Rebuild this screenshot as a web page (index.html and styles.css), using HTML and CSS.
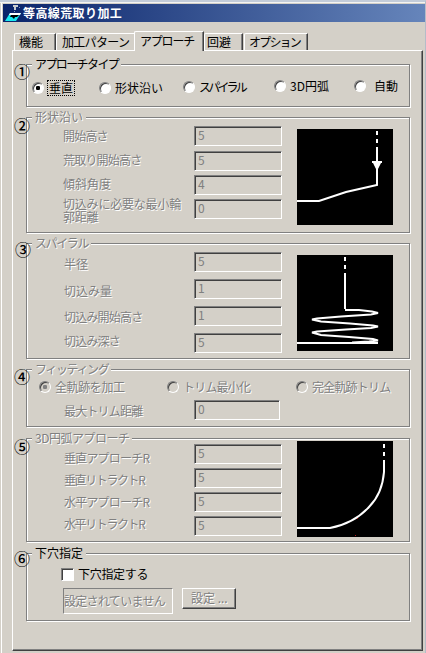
FILE: index.html
```html
<!DOCTYPE html>
<html lang="ja">
<head>
<meta charset="utf-8">
<title>等高線荒取り加工</title>
<link rel="stylesheet" href="styles.css">
</head>
<body>
<div class="window">
  <header class="titlebar">
    <svg class="app-icon" width="17" height="17" viewBox="0 0 17 17">
      <path d="M5 8H16L11 16H0Z" fill="#19e8f0"/>
      <path d="M5 8H16L15 10H4Z" fill="#fff"/>
      <path d="M6 10H14L12 12H10L9 14L7 12H5Z" fill="#000"/>
      <path d="M8 0H13V2H11V5H9V2H8Z" fill="#c8ccd0"/>
      <path d="M14 2h1v1h-1zM9 6h1v1h-1z" fill="#8a9ab8"/>
    </svg>
    <span class="title">等高線荒取り加工</span>
  </header>

  <nav class="tabs">
    <div class="tab t1">機能</div>
    <div class="tab t2">加工パターン</div>
    <div class="tab t3 active">アプローチ</div>
    <div class="tab t4">回避</div>
    <div class="tab t5">オプション</div>
  </nav>

  <main class="panel">
    <section class="group type">
      <span class="legend on type-name">アプローチタイプ</span><span class="num n1">①</span>
      <div class="radios">
        <label class="opt o1"><i class="radio checked"></i><span class="focus">垂直</span></label>
        <label class="opt o2"><i class="radio"></i><span>形状沿い</span></label>
        <label class="opt o3"><i class="radio"></i><span class="tight">スパイラル</span></label>
        <label class="opt o4"><i class="radio"></i><span>3D円弧</span></label>
        <label class="opt o5"><i class="radio"></i><span>自動</span></label>
      </div>
    </section>

    <section class="group along">
      <span class="legend">形状沿い</span><span class="num n2">②</span>
      <div class="labels">
        <span class="narrow">開始高さ</span><span class="narrow">荒取り開始高さ</span><span>傾斜角度</span><span class="wrapped">切込みに必要な最小輪<br>郭距離</span>
      </div>
      <div class="fields"><div class="field">5</div><div class="field">5</div><div class="field">4</div><div class="field">0</div></div>
      <svg class="preview" width="96" height="96" viewBox="0 0 96 96">
        <path d="M80 2v4M80 10v4M80 18v38L71 58L49 63L22 72H0" fill="none" stroke="#fff" stroke-width="2"/>
        <path d="M75 32H85V34H84L81 40H79L76 34H75Z" fill="#fff"/>
      </svg>
    </section>

    <section class="group spiral">
      <span class="legend kana">スパイラル</span><span class="num n3">③</span>
      <div class="labels">
        <span>半径</span><span>切込み量</span><span class="narrow">切込み開始高さ</span><span class="narrow">切込み深さ</span>
      </div>
      <div class="fields"><div class="field">5</div><div class="field">1</div><div class="field">1</div><div class="field">5</div></div>
      <svg class="preview" width="96" height="96" viewBox="0 0 96 96">
        <path d="M48 2v4M48 10v4M48 18V54" fill="none" stroke="#fff" stroke-width="2"/>
        <path d="M48 55H62L75 56.500L81 58L74 59.500L44 61.500L20 63.500L15 64.500L24 66.500L53 68.500L76 70.500L81 71.500L74 73L49 74.500L20 76.500L15 77.500L24 80L52 82L76 84L81 85.500L72 86.500L55 87.500M0 88H81" fill="none" stroke="#fff" stroke-width="2"/>
      </svg>
    </section>

    <section class="group fitting">
      <span class="legend kana">フィッティング</span><span class="num n4">④</span>
      <div class="radios">
        <label class="opt f1"><i class="radio dim checked"></i><span class="all">全軌跡を加工</span></label>
        <label class="opt f2"><i class="radio dim"></i><span class="narrow">トリム最小化</span></label>
        <label class="opt f3"><i class="radio dim"></i><span class="narrow">完全軌跡トリム</span></label>
      </div>
      <div class="trim"><span class="narrow">最大トリム距離</span><div class="field">0</div></div>
    </section>

    <section class="group arc">
      <span class="legend arc-name">3D円弧アプローチ</span><span class="num n5">⑤</span>
      <div class="labels">
        <span class="narrow">垂直アプローチR</span><span class="kana">垂直リトラクトR</span><span class="narrow">水平アプローチR</span><span class="kana">水平リトラクトR</span>
      </div>
      <div class="fields"><div class="field">5</div><div class="field">5</div><div class="field">5</div><div class="field">5</div></div>
      <svg class="preview" width="96" height="96" viewBox="0 0 96 96">
        <path d="M87 3v4M87 11v4M87 19V31C86 44 81 57 72 66C61 78 49 84 33 87H0" fill="none" stroke="#fff" stroke-width="2"/>
        <path d="M60 77h1v1h-1zM58 94h1v1h-1z" fill="#b01818"/>
      </svg>
    </section>

    <section class="group hole">
      <span class="legend on">下穴指定</span><span class="num n6">⑥</span>
      <label class="check"><i class="box"></i><span>下穴指定する</span></label>
      <div class="hole-row"><div class="status">設定されていません</div><div class="button">設定 ...</div></div>
    </section>
  </main>
</div>
</body>
</html>
```
FILE: styles.css
```css
* { box-sizing: border-box; }
body {
  margin: 0;
  width: 426px;
  height: 653px;
  overflow: hidden;
  background: #d4d0c8;
  font: 12px/14px "Noto Sans CJK JP", sans-serif;
  color: #000;
}
.window {
  height: 653px;
  border-top: 2px solid #c3ccd9;
  border-right: 1px solid #b4bcc8;
  box-shadow: inset 0 1px 0 #f4f4f2;
  padding: 2px 0 0 3px;
  background: linear-gradient(#fff, #fff) 1px 0 / 1px 100% no-repeat, #d4d0c8;
}
.titlebar {
  height: 18px;
  display: flex;
  align-items: center;
  padding-left: 2px;
  background: linear-gradient(90deg, #0a246a, #6685bb);
}
.app-icon { flex: none; }
.title { margin-left: 1px; color: #fff; font-weight: 700; letter-spacing: .4px; white-space: nowrap; }

.tabs { height: 28px; display: flex; align-items: flex-end; padding-left: 11px; }
.tab {
  height: 17px;
  border: 1px solid #fff;
  border-width: 1px 0 0 1px;
  border-radius: 2px 0 0 0;
  white-space: nowrap;
  line-height: 15px;
}
.t1, .t4, .t5 { border-right: 1px solid #404040; box-shadow: inset -1px 0 0 #808080; }
.t1 { width: 42px; padding-left: 4px; }
.t2 { width: 78px; padding-left: 5px; letter-spacing: -.7px; }
.t3 { width: 70px; padding-left: 5px; letter-spacing: -1.2px; }
.t4 { width: 39px; padding-left: 2px; }
.t5 { width: 64px; margin-left: 1px; padding-left: 4px; letter-spacing: -1.8px; }
.tab.active {
  height: 20px;
  margin-bottom: -1px;
  line-height: 17px;
  background: #d4d0c8;
  position: relative;
  border-right: 1px solid #404040;
  box-shadow: inset -1px 0 0 #808080;
}
.panel {
  width: 411px;
  height: 601px;
  margin-left: 9px;
  padding: 13px 0 0 13px;
  border: 1px solid;
  border-color: #fff #404040 #404040 #fff;
  box-shadow: inset -1px -1px 0 #808080;
}

.group {
  position: relative;
  width: 384px;
  border: 1px solid #808080;
  box-shadow: 1px 1px 0 #fff, inset 1px 1px 0 #fff;
  margin-bottom: 10px;
  color: #808080;
  text-shadow: 1px 1px 0 #fff;
  white-space: nowrap;
}
.legend { position: absolute; left: 5px; top: -8px; padding: 0 3px; background: #d4d0c8; }
.legend.on, .type, .check { color: #000; text-shadow: none; }
.num { position: absolute; left: -13px; font-size: 16px; line-height: 18px; color: #000; font-weight: 500; text-shadow: none; }
.n1 { top: -3px; } .n2 { top: -2px; } .n3 { top: -4px; left: -12px; }
.n4 { top: -3px; } .n5 { top: -2px; } .n6 { top: -5px; }
.kana { letter-spacing: -1.4px; }
.narrow { letter-spacing: -.8px; }
.tight { letter-spacing: -2.8px; }
.type-name { letter-spacing: -1.6px; }
.arc-name { letter-spacing: -.5px; }
.wrapped { letter-spacing: -.2px; line-height: 13px; }
.all { letter-spacing: -.4px; }

.type { height: 43px; }
.along, .spiral { height: 116px; }
.fitting { height: 58px; margin-bottom: 11px; }
.arc { height: 104px; margin-bottom: 11px; }
.hole { height: 68px; }

.along, .spiral, .arc { display: grid; grid-template-columns: 131px 88px 111px; padding-left: 36px; }
.labels { display: grid; align-items: center; align-content: start; line-height: 12px; }
.fields { display: grid; align-content: start; }
.preview { margin-left: 15px; background: #000; }
.along .labels { grid-template-rows: 24px 24px 24px 28px; padding-top: 6px; }
.along .fields { grid-template-rows: 25px 24px 24px 20px; padding-top: 8px; }
.along .preview { margin-top: 11px; }
.spiral .labels { grid-template-rows: 27px 27px 26px 22px; padding: 6px 0 0 1px; }
.spiral .fields { grid-template-rows: repeat(4, 27px); padding-top: 8px; }
.spiral .preview { margin-top: 11px; }
.arc .labels { grid-template-rows: repeat(4, 22px); padding: 8px 0 0 1px; }
.arc .fields { grid-template-rows: repeat(4, 24px); padding-top: 5px; }
.arc .preview { margin-top: 2px; }

.field {
  width: 88px;
  height: 20px;
  padding-left: 3px;
  border: 1px solid;
  border-color: #808080 #fff #fff #808080;
  box-shadow: inset 1px 1px 0 #404040;
  line-height: 15px;
  text-shadow: none;
}

.radios { display: flex; }
.type .radios { padding: 15px 0 0 5px; }
.opt { display: flex; height: 16px; align-items: center; flex: none; }
.o1 { width: 67px; } .o2 { width: 84px; } .o3 { width: 91px; margin-top: -1px; }
.o4 { width: 80px; margin-top: -2px; } .o5 { margin-top: -2px; }
.o1 .radio { margin-right: 3px; }
.o5 .radio { margin-right: 8px; }
.focus { outline: 1px dotted #000; padding: 0 1px; margin-left: 1px; }
.radio {
  flex: none;
  width: 12px;
  height: 12px;
  margin-right: 4px;
  border-radius: 50%;
  border: 1px solid;
  border-color: #808080 #fff #fff #808080;
  background: #fff;
  box-shadow: inset 1px 1px 0 #404040;
}
.radio.checked { background: radial-gradient(circle, #000 0 2px, #fff 2.4px); }
.radio.dim { background: #d4d0c8; }
.radio.dim.checked { background: radial-gradient(circle, #808080 0 2px, #d4d0c8 2.4px); }

.fitting .radios { padding: 9px 0 0 12px; }
.f1 { width: 128px; } .f2 { width: 129px; }
.trim { display: flex; align-items: center; margin: 5px 0 0 37px; }
.trim span { width: 130px; padding-top: 2px; }
.trim .field { width: 86px; }

.check { display: flex; align-items: center; height: 16px; margin: 12px 0 0 34px; }
.box { width: 13px; height: 13px; margin-right: 4px; border: 1px solid; border-color: #808080 #fff #fff #808080; box-shadow: inset 1px 1px 0 #404040; background: #fff; }
.check span { letter-spacing: -.3px; }
.hole-row { display: flex; align-items: flex-start; margin: 6px 0 0 36px; gap: 9px; }
.status { width: 110px; height: 26px; line-height: 24px; border: 1px solid; border-color: #808080 #fff #fff #808080; letter-spacing: -.7px; }
.button { width: 54px; height: 21px; line-height: 18px; padding-left: 8px; border: 1px solid; border-color: #fff #404040 #404040 #fff; box-shadow: inset -1px -1px 0 #808080; }
```
